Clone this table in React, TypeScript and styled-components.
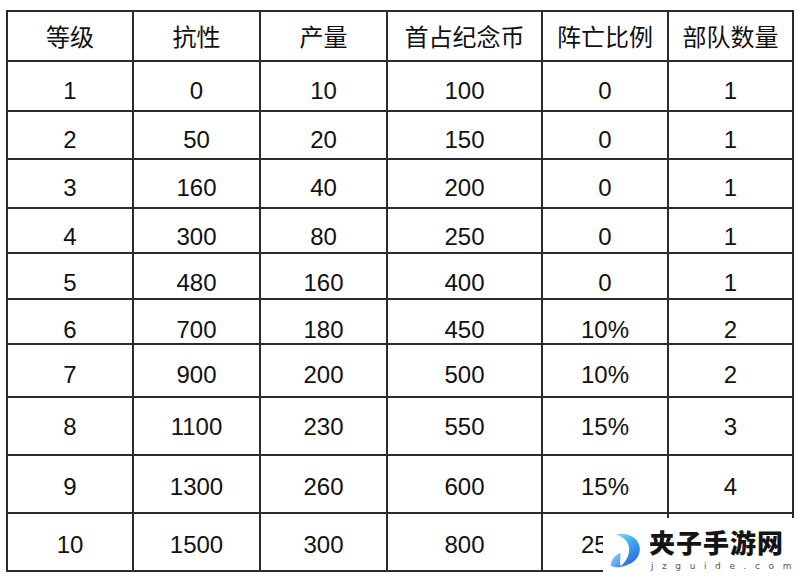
import React from 'react';
import styled, { createGlobalStyle } from 'styled-components';

const GlobalStyle = createGlobalStyle`
  html, body {
    margin: 0;
    padding: 0;
    background: #ffffff;
  }
  body {
    width: 800px;
    height: 578px;
    overflow: hidden;
    font-family: "Liberation Sans", "Noto Sans CJK SC", sans-serif;
  }
`;

const Page = styled.div`
  position: relative;
  width: 800px;
  height: 578px;
  padding: 10px 0 0 6px;
  box-sizing: border-box;
  background: #ffffff;
`;

const Sheet = styled.div<{ $rows: string }>`
  display: grid;
  grid-template-columns: 124px 125px 125px 153px 124px 123px;
  grid-template-rows: ${(p) => p.$rows};
  gap: 2px;
  padding: 2px;
  width: fit-content;
  background: #2b2b2b;
`;

const Cell = styled.div<{ $pad: number }>`
  background: #ffffff;
  color: #111111;
  text-align: center;
  font-size: 24px;
  line-height: 24px;
  padding-top: ${(p) => p.$pad}px;
  box-sizing: border-box;
  white-space: nowrap;
  overflow: hidden;
`;

const Watermark = styled.div`
  position: absolute;
  left: 603px;
  top: 518px;
  width: 197px;
  height: 60px;
  background: #ffffff;
  display: flex;
  align-items: flex-start;
  padding: 8px 0 0 6px;
  box-sizing: border-box;
  gap: 6px;
`;

const BrandText = styled.div`
  display: flex;
  flex-direction: column;
  padding-top: 1px;
`;

const BrandName = styled.div`
  font-family: "Noto Sans CJK SC", sans-serif;
  font-weight: 900;
  font-size: 26px;
  line-height: 30px;
  color: #141414;
  letter-spacing: 1px;
`;

const BrandUrl = styled.div`
  margin-top: 4px;
  font-family: "DejaVu Sans", sans-serif;
  font-size: 9px;
  line-height: 11px;
  color: #555555;
  letter-spacing: 8.6px;
  padding-left: 2px;
`;

const header = ['等级', '抗性', '产量', '首占纪念币', '阵亡比例', '部队数量'];

// last cell of the last row sits under the watermark
const rows: string[][] = [
  ['1', '0', '10', '100', '0', '1'],
  ['2', '50', '20', '150', '0', '1'],
  ['3', '160', '40', '200', '0', '1'],
  ['4', '300', '80', '250', '0', '1'],
  ['5', '480', '160', '400', '0', '1'],
  ['6', '700', '180', '450', '10%', '2'],
  ['7', '900', '200', '500', '10%', '2'],
  ['8', '1100', '230', '550', '15%', '3'],
  ['9', '1300', '260', '600', '15%', '4'],
  ['10', '1500', '300', '800', '25%', ''],
];

// content height of each row, and where its text starts
const rowHeights = [48, 48, 46, 47, 43, 44, 43, 51, 56, 56, 56];
const rowPads = [14, 17, 16, 16, 16, 17, 18, 18, 17, 19, 19];

const Logo = () => (
  <svg width="44" height="48" viewBox="0 0 44 48">
    <defs>
      <linearGradient id="lg-body" x1="0" y1="0" x2="0.6" y2="1">
        <stop offset="0" stopColor="#86e0fc" />
        <stop offset="0.45" stopColor="#42a8f3" />
        <stop offset="1" stopColor="#2d6ade" />
      </linearGradient>
      <linearGradient id="lg-fin" x1="0" y1="0" x2="1" y2="1">
        <stop offset="0" stopColor="#a6dcff" />
        <stop offset="1" stopColor="#3a84ea" />
      </linearGradient>
    </defs>
    <path
      d="M9 4 C24 0 40 9 40 23 C40 35 29 44 14 46 C23 38 27 30 26 21 C25 13 18 7 9 4 Z"
      fill="url(#lg-body)"
    />
    <path
      d="M2 44 C3 36 8 30 15 28 C15 35 13 41 16 46 C10 47 5 46 2 44 Z"
      fill="url(#lg-fin)"
    />
  </svg>
);

const App = () => {
  const all = [header, ...rows];
  return (
    <>
      <GlobalStyle />
      <Page>
        <Sheet $rows={rowHeights.map((h) => `${h}px`).join(' ')}>
          {all.map((row, r) =>
            row.map((value, c) => (
              <Cell key={`${r}-${c}`} $pad={rowPads[r]}>
                {value}
              </Cell>
            ))
          )}
        </Sheet>
        <Watermark>
          <Logo />
          <BrandText>
            <BrandName>夹子手游网</BrandName>
            <BrandUrl>jzguide.com</BrandUrl>
          </BrandText>
        </Watermark>
      </Page>
    </>
  );
};

export default App;
